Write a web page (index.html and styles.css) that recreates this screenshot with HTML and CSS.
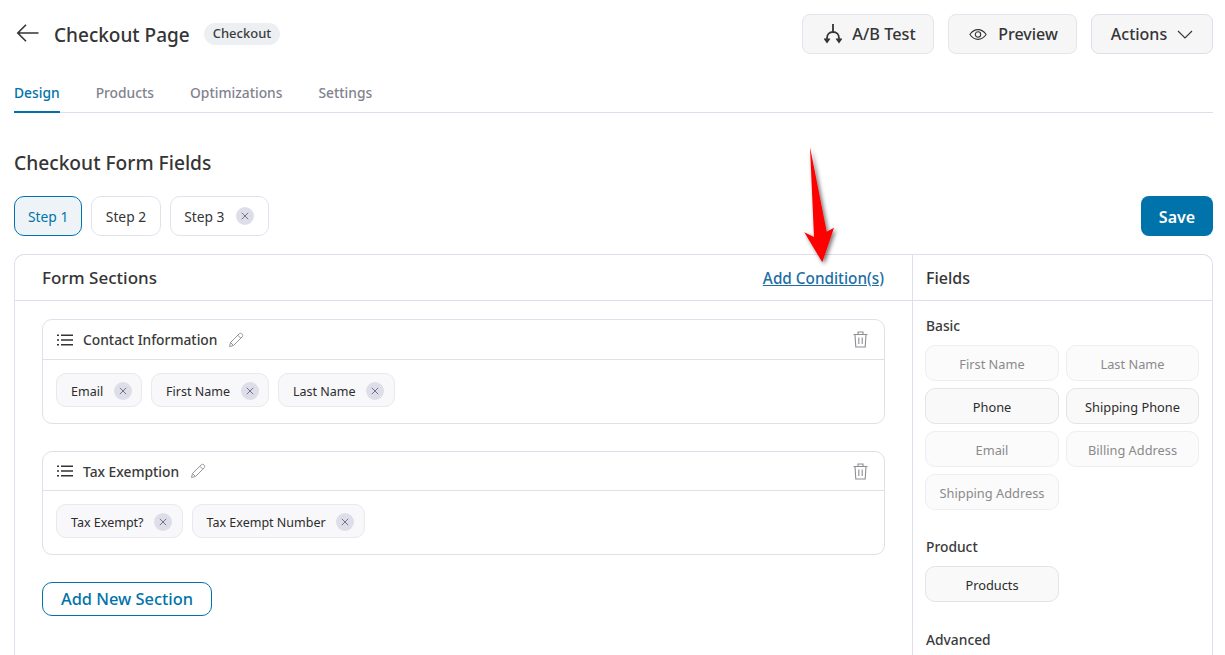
FILE: index.html
```html
<!DOCTYPE html>
<html lang="en">
<head>
<meta charset="utf-8">
<title>Checkout Page</title>
<link rel="stylesheet" href="styles.css">
</head>
<body>
<div class="page">
  <header class="top">
    <div class="title-wrap">
      <svg class="back" width="24" height="18" viewBox="0 0 24 18" fill="none" stroke="#333" stroke-width="1.6"><path d="M22.500 9H2M10 .8 1.800 9l8.200 8.200"/></svg>
      <h1 class="title">Checkout Page</h1>
      <span class="badge">Checkout</span>
    </div>
    <div class="top-actions">
      <button class="btn btn-ab"><svg width="18" height="20" viewBox="0 0 18 20" fill="none" stroke="#333" stroke-width="1.8"><path d="M9 0v8M3 18v-4c0-3.500 2.500-6 6-6s6 2.500 6 6v4M.5 14.500 3 18l2.500-3.500M12.500 14.500 15 18l2.500-3.500"/></svg>A/B Test</button>
      <button class="btn btn-preview"><svg width="18" height="13" viewBox="0 0 20 14" fill="none" stroke="#333" stroke-width="1.2"><path d="M1 7c2.500-3.600 5.500-5.400 9-5.400S16.500 3.400 19 7c-2.500 3.600-5.500 5.400-9 5.400S3.500 10.600 1 7Z"/><circle cx="10" cy="7" r="3"/></svg>Preview</button>
      <button class="btn btn-actions">Actions<svg width="16" height="9" viewBox="0 0 16 9" fill="none" stroke="#333" stroke-width="1.1"><path d="m1 1 7 7 7-7"/></svg></button>
    </div>
  </header>
  <nav class="tabs">
    <a class="tab active">Design</a>
    <a class="tab">Products</a>
    <a class="tab">Optimizations</a>
    <a class="tab">Settings</a>
  </nav>
  <h2 class="heading">Checkout Form Fields</h2>
  <div class="steps-row">
    <div class="steps">
      <span class="step current">Step 1</span>
      <span class="step">Step 2</span>
      <span class="step">Step 3<span class="x"><svg viewBox="0 0 8 8"><path d="m.8.8 6.400 6.400M7.200.8.8 7.200"/></svg></span></span>
    </div>
    <button class="save">Save</button>
  </div>
  <div class="panel">
    <section class="left">
      <div class="left-head">
        <h3 class="panel-title panel-title-lg">Form Sections</h3>
        <a class="cond">Add Condition(s)</a>
      </div>
      <div class="left-body">
        <div class="sec">
          <div class="sec-head">
            <svg class="list" width="16" height="12" viewBox="0 0 16 12" fill="none" stroke="#333" stroke-width="1.500"><path d="M4 1.200h12M4 6h12M4 10.800h12M0 1.200h2M0 6h2M0 10.800h2"/></svg>
            <span class="sec-name">Contact Information</span>
            <svg class="pen" width="16" height="16" viewBox="0 0 16 16" fill="none" stroke="#999" stroke-width="1"><path d="M1.500 14.500 2.500 10.500 11 2c1-1 2-1 3 0s1 2 0 3l-8.500 8.500ZM9.800 3.200l3 3M2.500 10.500l3 3"/></svg>
            <svg class="trash" width="15" height="17" viewBox="0 0 15 17" fill="none" stroke="#8d8d94" stroke-width="1.100"><path d="M.5 3.500h14M5 3.500V1h5v2.500M2 3.500l.8 12.500h9.400L13 3.500M5.800 6.500v6.500M9.200 6.500v6.500"/></svg>
          </div>
          <div class="chips">
            <span class="chip">Email<span class="x"><svg viewBox="0 0 8 8"><path d="m.8.8 6.400 6.400M7.200.8.8 7.200"/></svg></span></span>
            <span class="chip">First Name<span class="x"><svg viewBox="0 0 8 8"><path d="m.8.8 6.400 6.400M7.200.8.8 7.200"/></svg></span></span>
            <span class="chip">Last Name<span class="x"><svg viewBox="0 0 8 8"><path d="m.8.8 6.400 6.400M7.200.8.8 7.200"/></svg></span></span>
          </div>
        </div>
        <div class="sec sec-tight">
          <div class="sec-head">
            <svg class="list" width="16" height="12" viewBox="0 0 16 12" fill="none" stroke="#333" stroke-width="1.500"><path d="M4 1.200h12M4 6h12M4 10.800h12M0 1.200h2M0 6h2M0 10.800h2"/></svg>
            <span class="sec-name">Tax Exemption</span>
            <svg class="pen" width="16" height="16" viewBox="0 0 16 16" fill="none" stroke="#999" stroke-width="1"><path d="M1.500 14.500 2.500 10.500 11 2c1-1 2-1 3 0s1 2 0 3l-8.500 8.500ZM9.800 3.200l3 3M2.500 10.500l3 3"/></svg>
            <svg class="trash" width="15" height="17" viewBox="0 0 15 17" fill="none" stroke="#8d8d94" stroke-width="1.100"><path d="M.5 3.500h14M5 3.500V1h5v2.500M2 3.500l.8 12.500h9.400L13 3.500M5.800 6.500v6.500M9.200 6.500v6.500"/></svg>
          </div>
          <div class="chips">
            <span class="chip">Tax Exempt?<span class="x"><svg viewBox="0 0 8 8"><path d="m.8.8 6.400 6.400M7.200.8.8 7.200"/></svg></span></span>
            <span class="chip">Tax Exempt Number<span class="x"><svg viewBox="0 0 8 8"><path d="m.8.8 6.400 6.400M7.200.8.8 7.200"/></svg></span></span>
          </div>
        </div>
        <button class="add">Add New Section</button>
      </div>
    </section>
    <aside class="right">
      <div class="right-head"><h3 class="panel-title">Fields</h3></div>
      <div class="right-body">
        <h4 class="group">Basic</h4>
        <div class="grid">
          <span class="field off">First Name</span>
          <span class="field off">Last Name</span>
          <span class="field on">Phone</span>
          <span class="field on">Shipping Phone</span>
          <span class="field off">Email</span>
          <span class="field off">Billing Address</span>
          <span class="field off">Shipping Address</span>
        </div>
        <h4 class="group group-next">Product</h4>
        <div class="grid">
          <span class="field on">Products</span>
        </div>
        <h4 class="group group-adv">Advanced</h4>
      </div>
    </aside>
  </div>
  <svg class="arrow" width="50" height="130" viewBox="0 0 50 130">
    <defs><filter id="sh" x="-40%" y="-10%" width="180%" height="125%"><feDropShadow dx="2" dy="2" stdDeviation="2" flood-color="#000" flood-opacity=".55"/></filter></defs>
    <path d="M10 3 26.700 87.700 34 83.700 22.300 118.300 4.300 88.300 14 93Z" fill="#fe0000" filter="url(#sh)"/>
  </svg>
</div>
</body>
</html>
```
FILE: styles.css
```css
* { box-sizing: border-box; }
html, body { margin: 0; height: 100%; overflow: hidden; background: #fff; }
body { font-family: "Noto Sans", "Open Sans", sans-serif; color: #333; }
.page { position: relative; height: 655px; padding: 14px 12px 0 14px; overflow: hidden; }
h1, h2, h3, h4 { margin: 0; font-weight: 500; }
button { font-family: inherit; cursor: pointer; }

.top { display: flex; justify-content: space-between; align-items: flex-start; height: 40px; }
.title-wrap { display: flex; align-items: center; height: 40px; }
.back { margin-left: 2px; margin-top: -2px; }
.title { font-size: 19px; line-height: 28px; margin-left: 14px; margin-top: 2px; color: #353535; }
.badge { margin-left: 14px; margin-top: -1px; height: 22px; line-height: 21px; padding: 0 9px; border-radius: 11px; background: #edf0f3; font-size: 13px; font-weight: 500; color: #3c3c3c; }
.top-actions { display: flex; gap: 14px; }
.btn { display: flex; align-items: center; justify-content: center; height: 40px; border: 1px solid #e4e4ee; border-radius: 8px; background: #f6f6f7; color: #353535; font-size: 16px; font-weight: 500; }
.btn-ab { width: 132px; gap: 10px; padding: 0 0 0 4px; font-size: 16.3px; }
.btn-preview { width: 129px; gap: 11px; padding: 0 0 0 2px; }
.btn-actions { width: 122px; gap: 10px; border-color: #dedeec; }

.tabs { display: flex; gap: 36px; height: 59px; padding-top: 25px; border-bottom: 1px solid #dedeec; }
.tab { display: block; height: 34px; line-height: 27px; font-size: 13.8px; font-weight: 500; color: #82828f; }
.tab.active { color: #0073aa; border-bottom: 2px solid #0073aa; }

.heading { margin-top: 36px; font-size: 19.2px; line-height: 28px; color: #353535; }
.steps-row { display: flex; justify-content: space-between; margin-top: 19px; height: 40px; }
.steps { display: flex; gap: 9px; }
.step { display: flex; align-items: center; gap: 12px; height: 40px; padding: 0 13.5px; border: 1px solid #e2e2ee; border-radius: 10px; font-size: 13.8px; color: #353535; }
.step.current { padding: 0 13px; color: #0073aa; border-color: #0073aa; background: #edf3f7; }
.save { width: 72px; height: 40px; padding: 2px 0 0; border: 0; border-radius: 8px; background: #0073aa; color: #fff; font-size: 16px; font-weight: 600; }
.x { display: flex; align-items: center; justify-content: center; width: 18px; height: 18px; border-radius: 50%; background: #dedeea; }
.x svg { width: 8px; height: 8px; fill: none; stroke: #75757f; stroke-width: 1; }

.panel { display: flex; width: 1199px; height: 500px; margin-top: 18px; border: 1px solid #dedeec; border-bottom: 0; border-radius: 10px 10px 0 0; }
.left { width: 898px; border-right: 1px solid #dedeec; }
.left-head { display: flex; justify-content: space-between; align-items: center; height: 46px; padding: 0 27px 0 27px; border-bottom: 1px solid #dedeec; }
.panel-title { font-size: 16px; color: #353535; }
.panel-title-lg { font-size: 17px; }
.cond { margin-right: 1px; font-size: 15.3px; font-weight: 500; color: #1c6ea4; text-decoration: underline; }
.left-body { padding: 18px 27px 0; }
.sec { height: 105px; margin-bottom: 27px; border: 1px solid #e0e0ea; border-radius: 10px; }
.sec-tight { height: 104px; }
.sec-head { display: flex; align-items: center; height: 40px; padding: 0 16px 0 14px; border-bottom: 1px solid #e0e0ea; }
.sec-tight .sec-head { height: 39px; }
.sec-name { margin-left: 10px; font-size: 13.8px; font-weight: 500; color: #3a3a3a; }
.pen { margin-left: 11px; }
.trash { margin-left: auto; }
.chips { display: flex; gap: 9px; padding: 13px 13px 0; }
.chip { display: flex; align-items: center; gap: 10.5px; height: 34px; padding: 2px 9.5px 0 14px; border: 1px solid #e8e8ee; border-radius: 10px; background: #f8f8fa; font-size: 12.5px; color: #2c2c2c; }
.add { display: block; width: 170px; height: 34px; margin-top: 0; border: 1px solid #0073aa; border-radius: 10px; background: #fff; color: #0073aa; font-size: 16.4px; font-weight: 500; padding: 0 0 2px; }

.right { flex: 1; }
.right-head { display: flex; align-items: center; height: 46px; padding: 0 13px; border-bottom: 1px solid #dedeec; }
.right-body { padding: 14px 13px 0 12px; }
.group { margin-left: 1px; font-size: 13.8px; line-height: 22px; color: #3a3a3a; }
.grid { display: grid; grid-template-columns: 134px 133px; column-gap: 7px; row-gap: 7px; margin-top: 8px; }
.field { display: flex; align-items: center; justify-content: center; height: 36px; padding-top: 2px; border: 1px solid #eeeef2; border-radius: 10px; background: #fbfbfc; font-size: 12.8px; }
.field.off { color: #8a8a8a; }
.field.on { color: #2c2c2c; border-color: #e4e4e8; background: #f9f9f9; }
.group-next { margin-top: 26px; }
.group-adv { margin-top: 27px; }

.arrow { position: absolute; left: 800px; top: 144px; }
```
